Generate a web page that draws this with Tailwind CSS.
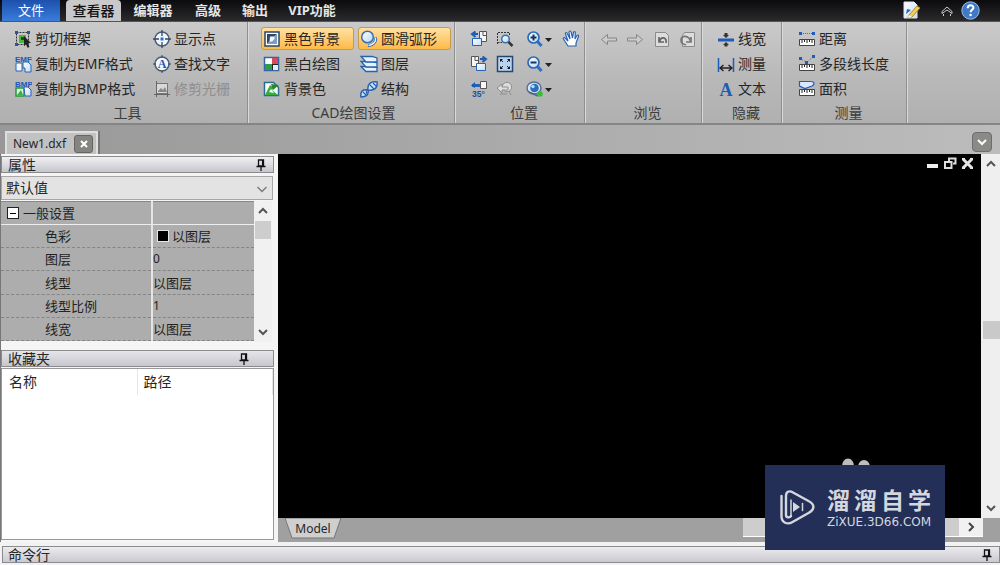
<!DOCTYPE html>
<html lang="zh-CN">
<head>
<meta charset="utf-8">
<meta name="viewport" content="width=device-width, initial-scale=1">
<title>CAD Viewer - New1.dxf</title>
<script src="https://cdn.jsdelivr.net/npm/@tailwindcss/browser@4"></script>
</head>
<body class="flex h-screen flex-col overflow-hidden bg-[#f2f2f3] font-['Noto_Sans','Noto_Sans_CJK_SC',sans-serif] text-sm text-[#262626]">

<svg class="absolute h-0 w-0" aria-hidden="true">
  <defs>
    <linearGradient id="lens" x1="0" y1="0" x2="1" y2="1"><stop offset="0" stop-color="#fff"/><stop offset="1" stop-color="#b9d8f7"/></linearGradient>
    <linearGradient id="sheet" x1="0" y1="0" x2="1" y2="1"><stop offset="0" stop-color="#fff"/><stop offset="1" stop-color="#c3dcf7"/></linearGradient>
    <symbol id="pin" viewBox="0 0 10 12"><path d="M2.5 1h5v6h-5zM0.5 7.5h9M5 8v4M6.6 1v6" fill="none" stroke="#111" stroke-width="1.3"/></symbol>
    <symbol id="chev" viewBox="0 0 12 12"><path d="M2 4l4 4 4-4" fill="none" stroke="currentColor" stroke-width="2"/></symbol>
    <symbol id="ruler" viewBox="0 0 18 18"><path d="M1.5 9.5h15v6h-15z" fill="#fff" stroke="#444"/><path d="M4 10v3M6.500 10v2M9 10v3M11.500 10v2M14 10v3" stroke="#222"/></symbol>
  </defs>
</svg>

<!-- Menu tabs -->
<header class="flex h-[22px] shrink-0 items-stretch border-b border-[#555] bg-linear-to-b from-[#0b0b0d] to-[#2b2b2d] text-[13px] font-bold text-[#e6e6e6]">
  <nav class="flex items-stretch pl-0.5">
    <button class="w-[58px] bg-linear-to-b from-[#1e50ad] to-[#3b7ddb] text-[13px] font-normal text-white">文件</button>
    <button class="ml-1.5 w-[55px] rounded-t-sm bg-[#c9c9c9] text-sm font-medium text-[#111]">查看器</button>
    <button class="w-[64px]">编辑器</button>
    <button class="w-[46px]">高级</button>
    <button class="w-12">输出</button>
    <button class="w-[66px]">VIP功能</button>
  </nav>
  <div class="ml-auto flex items-center pr-5">
    <button class="mr-5" aria-label="编辑文档"><svg class="h-[19px] w-[19px]" viewBox="0 0 19 19"><path d="M2 1h10l3 3v13H2z" fill="url(#sheet)" stroke="#d9e6f5"/><path d="M4 13l1-5 4 1z" fill="#2d66b5"/><path d="M7 14L15 5l3 2-8 9-4 1z" fill="#f1cf5a" stroke="#a98936"/><path d="M6 17l1-3 3 2z" fill="#fff"/></svg></button>
    <button class="mr-2" aria-label="收起功能区"><svg class="h-3 w-3" viewBox="0 0 12 12" fill="none" stroke="#ccc"><path d="M1 6.500L6 2l5 4.500v2L6 5 1 8.500zM2.500 9v2M9.500 9v2"/></svg></button>
    <button aria-label="帮助"><svg class="h-[19px] w-[19px]" viewBox="0 0 19 19"><circle cx="9.500" cy="9.500" r="8.700" fill="#4079c4" stroke="#9bbfe8"/><path d="M6.700 7.200c0-4 6-3.700 5.700-.3-.2 1.900-2.800 2-2.800 4.400" fill="none" stroke="#fff" stroke-width="2"/><circle cx="9.600" cy="14" r="1.300" fill="#fff"/></svg></button>
  </div>
</header>

<!-- Ribbon -->
<section class="flex h-[103px] shrink-0 items-stretch border-b-2 border-[#858585] bg-linear-to-b from-[#cacaca] via-[#bababa] to-[#b0b0b0] leading-5">

  <div class="flex w-[248px] shrink-0 flex-col border-r border-[#8f8f8f] pt-1">
    <div class="grid grid-cols-[139px_1fr] pl-3.5">
      <button class="flex h-[25px] items-center gap-[3px] whitespace-nowrap"><svg class="h-[18px] w-[18px] shrink-0" viewBox="0 0 18 18"><path d="M2.500 2.500h12v12h-12z" fill="none" stroke="#333" stroke-dasharray="2 1"/><path d="M5 5h7v8H5z" fill="#49b83c"/><path d="M7 7h3v3H7z" fill="#1d4f20"/><path d="M1 1h3v3H1zM13 1h3v3h-3zM1 13h3v3H1z" fill="#1d56b5"/><path d="M10 6l7 7-3 .3 1.500 3.700-2 .8-1.500-3.500-2 2z" fill="#222"/></svg>剪切框架</button>
      <button class="flex h-[25px] items-center gap-[3px] whitespace-nowrap"><svg class="h-[18px] w-[18px] shrink-0" viewBox="0 0 18 18"><circle cx="9" cy="9" r="7" fill="#f3f7fc" stroke="#4b5d78" stroke-width="1.500"/><path d="M9 0v6M9 12v6M0 9h6M12 9h6" stroke="#35475f" stroke-width="1.300"/><path d="M7.500 7.500h3v3h-3z" fill="#2a6fd0"/></svg>显示点</button>
      <button class="flex h-[25px] items-center gap-[3px] whitespace-nowrap"><svg class="h-[18px] w-[18px] shrink-0" viewBox="0 0 18 18"><text x="1" y="6.500" font-family="Liberation Sans" font-weight="bold" font-size="8" fill="#1d56b5">EMF</text><path d="M2 8h6v8H2z" fill="#f4f8ff" stroke="#2763ba"/><path d="M9 7h5l3 3v7h-6v-4H9z" fill="url(#sheet)" stroke="#2763ba"/></svg>复制为EMF格式</button>
      <button class="flex h-[25px] items-center gap-[3px] whitespace-nowrap"><svg class="h-[18px] w-[18px] shrink-0" viewBox="0 0 18 18"><circle cx="9" cy="9" r="7" fill="#f3f7fc" stroke="#4b5d78" stroke-width="1.500"/><path d="M9 0v3M9 15v3M0 9h3M15 9h3" stroke="#35475f"/><text x="9" y="13" text-anchor="middle" font-family="Liberation Serif" font-weight="bold" font-size="12" fill="#1d56b5">A</text></svg>查找文字</button>
      <button class="flex h-[25px] items-center gap-[3px] whitespace-nowrap"><svg class="h-[18px] w-[18px] shrink-0" viewBox="0 0 18 18"><text x="1" y="6.500" font-family="Liberation Sans" font-weight="bold" font-size="8" fill="#1d56b5">BMP</text><path d="M2 8h8v8H2z" fill="#dff5df" stroke="#27983a" stroke-width="1.500"/><path d="M3 15l4-5 2 5z" fill="#35b244"/><path d="M10 7h4l3 3v6h-6z" fill="url(#sheet)" stroke="#2763ba"/></svg>复制为BMP格式</button>
      <button disabled class="flex h-[25px] items-center gap-[3px] whitespace-nowrap text-[#8e8e8e]"><svg class="h-[18px] w-[18px] shrink-0" viewBox="0 0 18 18"><path d="M3.500 3.500h11v10h-11z" fill="#d8d8d8" stroke="#777"/><path d="M5 11l3-3 2 2 2-3 2 5H5z" fill="#888"/><path d="M1 14.500h16M3.500 1v16M14.500 12v5" stroke="#666"/></svg>修剪光栅</button>
    </div>
    <div class="pt-0.5 pl-2 text-center text-[#3c3c3c]">工具</div>
  </div>

  <div class="flex w-[207px] shrink-0 flex-col border-r border-l border-r-[#8f8f8f] border-l-[#dadada] pt-1">
    <div class="grid grid-cols-[93px_93px] gap-x-1 pl-3">
      <button aria-pressed="true" class="my-px flex h-[23px] items-center gap-[3px] rounded-[3px] border border-[#c59a4c] bg-linear-to-b from-[#ffe1a0] to-[#fdba45] pl-px whitespace-nowrap"><svg class="h-[18px] w-[18px] shrink-0" viewBox="0 0 18 18"><path d="M2 2h14v14H2z" fill="#fff" stroke="#27476f" stroke-width="1.500"/><path d="M4 4h10L4 14z" fill="#2f4667"/><path d="M14 4v10H4z" fill="#7d9cc5"/><path d="M7 6.500h4.500V9L9 11.500H6.500z" fill="#f2f7fd"/></svg>黑色背景</button>
      <button aria-pressed="true" class="my-px flex h-[23px] items-center gap-[3px] rounded-[3px] border border-[#c59a4c] bg-linear-to-b from-[#ffe1a0] to-[#fdba45] pl-px whitespace-nowrap"><svg class="h-[18px] w-[18px] shrink-0" viewBox="0 0 18 18"><circle cx="7.500" cy="7" r="5.800" fill="url(#lens)" stroke="#3d6fae" stroke-width="1.500"/><path d="M15.500 7.500c1 4-3 8.500-7.500 8" fill="none" stroke="#3d6fae" stroke-width="3"/><path d="M15.500 8c.8 3.500-2.700 7.500-7 7.300" fill="none" stroke="#fff" stroke-width="1.300"/></svg>圆滑弧形</button>
      <button class="flex h-[25px] items-center gap-[3px] pl-0.5 whitespace-nowrap"><svg class="h-[18px] w-[18px] shrink-0" viewBox="0 0 18 18"><path d="M1.500 2.500h14v13h-14z" fill="#fff" stroke="#34679f" stroke-width="1.500"/><path d="M9 3h6v6H9z" fill="#d34c5f"/><path d="M2 9h7v6H2z" fill="#2f9950"/><path d="M9 9h6v6H9z" fill="#222"/><path d="M10 10h5v5h-5z" fill="#e9eef5"/></svg>黑白绘图</button>
      <button class="flex h-[25px] items-center gap-[3px] pl-0.5 whitespace-nowrap"><svg class="h-[18px] w-[18px] shrink-0" viewBox="0 0 18 18" fill="#e8f2fd" stroke="#2862ae" stroke-width="1.300"><path d="M1 11.500h11l5 1v4H6z"/><path d="M1 6.500h11l5 1.500v4H6z"/><path d="M1 1.500h11l5 1.500v4H6z"/></svg>图层</button>
      <button class="flex h-[25px] items-center gap-[3px] pl-0.5 whitespace-nowrap"><svg class="h-[18px] w-[18px] shrink-0" viewBox="0 0 18 18"><path d="M1.500 2.500h9l5 5v8h-14z" fill="#fff" stroke="#2a6d93" stroke-width="1.500"/><path d="M2 15l5-10 4 3-2 2 6 5z" fill="#36ad3c"/><path d="M8 4l8 1-6 5z" fill="#27852e"/><path d="M6 12l2-3 3 4z" fill="#fff"/></svg>背景色</button>
      <button class="flex h-[25px] items-center gap-[3px] pl-0.5 whitespace-nowrap"><svg class="h-[18px] w-[18px] shrink-0" viewBox="0 0 18 18" fill="#cfe1f6" stroke="#2862ae" stroke-width="1.500"><path d="M1 17c-1-6 2-8 7-7 1 5-2 7-7 7zM8 10c-1-6 3-9 9-8 1 6-3 9-9 8z"/><path d="M3 12l3 3M6 10l1 4M10 5l4 4M13 3l3 3" stroke-width="1.200"/></svg>结构</button>
    </div>
    <div class="pt-0.5 pl-1 text-center text-[#3c3c3c]">CAD绘图设置</div>
  </div>

  <div class="flex w-[130px] shrink-0 flex-col border-r border-l border-r-[#8f8f8f] border-l-[#dadada] pt-1">
    <div class="grid grid-cols-[26px_30px_36px_24px] pl-3.5">
      <button class="flex h-[25px] items-center" aria-label="向左旋转"><svg class="h-[18px] w-[18px]" viewBox="0 0 18 18"><path d="M9.500 1.500h7v10h-7z" fill="#f7f7f7" stroke="#555"/><path d="M13 1.500v4h3.500" fill="none" stroke="#555"/><path d="M2.500 8.500h9v7h-9z" fill="url(#sheet)" stroke="#2563b8"/><path d="M8 4H4M5.500 1.500L2 4l3.500 3" fill="none" stroke="#1c5cb8" stroke-width="2"/></svg></button>
      <button class="flex h-[25px] items-center" aria-label="窗口缩放"><svg class="h-[18px] w-[18px]" viewBox="0 0 18 18"><path d="M1.500 14V2.500h12V5M1.500 12.500H6" fill="none" stroke="#333" stroke-dasharray="2 1"/><circle cx="9.500" cy="9" r="3.800" fill="url(#lens)" stroke="#3d6fae" stroke-width="1.500"/><path d="M12.500 12l4 4" stroke="#333" stroke-width="2.500"/></svg></button>
      <button class="flex h-[25px] items-center" aria-label="放大"><svg class="h-[18px] w-[27px]" viewBox="0 0 27 18"><circle cx="7.500" cy="7.500" r="5.500" fill="url(#lens)" stroke="#2b68b6" stroke-width="1.700"/><path d="M4.500 7.500h6M7.500 4.500v6" stroke="#17345e" stroke-width="2"/><path d="M11.500 11.500l4 4.500" stroke="#2d6ec2" stroke-width="3"/><path d="M19 8h7l-3.500 4z" fill="#222"/></svg></button>
      <button class="flex h-[25px] items-center" aria-label="平移"><svg class="h-[18px] w-[18px]" viewBox="0 0 18 18"><path d="M6 16L1.500 9c-.8-2 1.500-1.500 2.500 0L6 11 3.500 4c-.3-2 1.400-2 2 0L8 9 7 2.500c0-2 2-2 2.200 0L10.500 8l1-5.500c.5-1.700 2-1 1.800.5L13 9l2-3.500c1-1 2-.3 1.500 1L14 13v3z" fill="#fff" stroke="#2763ba" stroke-width="1.200"/></svg></button>
      <button class="flex h-[25px] items-center" aria-label="向右旋转"><svg class="h-[18px] w-[18px]" viewBox="0 0 18 18"><path d="M1.500 1.500h7v10h-7z" fill="#f7f7f7" stroke="#555"/><path d="M5 1.500v4h3.500" fill="none" stroke="#555"/><path d="M6.500 8.500h9v7h-9z" fill="url(#sheet)" stroke="#2563b8"/><path d="M10 4h4M12.500 1.500L16 4l-3.500 3" fill="none" stroke="#1c5cb8" stroke-width="2"/></svg></button>
      <button class="flex h-[25px] items-center" aria-label="适合窗口"><svg class="h-[18px] w-[18px]" viewBox="0 0 18 18"><path d="M1.500 1.500h15v15h-15z" fill="#b9d4f0" stroke="#25476f" stroke-width="1.500"/><path d="M4 4h3L4 7zM14 4v3l-3-3zM4 14v-3l3 3zM14 14h-3l3-3z" fill="#111"/><path d="M4 4l3 3M14 4l-3 3M4 14l3-3M14 14l-3-3" stroke="#222"/></svg></button>
      <button class="flex h-[25px] items-center" aria-label="缩小"><svg class="h-[18px] w-[27px]" viewBox="0 0 27 18"><circle cx="7.500" cy="7.500" r="5.500" fill="url(#lens)" stroke="#2b68b6" stroke-width="1.700"/><path d="M4.500 7.500h6" stroke="#17345e" stroke-width="2"/><path d="M11.500 11.500l4 4.500" stroke="#2d6ec2" stroke-width="3"/><path d="M19 8h7l-3.500 4z" fill="#222"/></svg></button>
      <span></span>
      <button class="flex h-[25px] items-center" aria-label="旋转35°"><svg class="h-[18px] w-[18px]" viewBox="0 0 18 18"><path d="M10.500 1.500h6v7h-6z" fill="#f7f7f7" stroke="#555"/><path d="M2 5.500h8" stroke="#2563b8" stroke-width="3"/><path d="M5 2L1 5.500 5 8z" fill="#1c5cb8"/><text x="2" y="16.500" font-family="Liberation Sans" font-size="8.500" font-weight="bold" fill="#1c4f9f">35°</text></svg></button>
      <button disabled class="flex h-[25px] items-center" aria-label="上一视图"><svg class="h-[18px] w-[18px]" viewBox="0 0 18 18" fill="#ddd" stroke="#8d8d8d"><circle cx="11" cy="7" r="4.700"/><path d="M1 8l5-4v3h6v3H6v3zM13 11l2 4M4 14h7"/></svg></button>
      <button class="flex h-[25px] items-center" aria-label="三维视图"><svg class="h-[18px] w-[27px]" viewBox="0 0 27 18"><ellipse cx="8" cy="8" rx="7" ry="6" fill="#d8e6f5" stroke="#57708e" stroke-width="1.500"/><circle cx="8.500" cy="8" r="4.300" fill="#296fbe"/><circle cx="7" cy="6.500" r="1.700" fill="#b7dcff"/><path d="M3 12l9 4" stroke="#4c6685" stroke-width="1.500"/><circle cx="14" cy="14" r="2.800" fill="#34bf35"/><path d="M19 8h7l-3.500 4z" fill="#222"/></svg></button>
    </div>
    <div class="pt-0.5 pl-2 text-center text-[#3c3c3c]">位置</div>
  </div>

  <div class="flex w-[117px] shrink-0 flex-col border-r border-l border-r-[#8f8f8f] border-l-[#dadada] pt-1">
    <div class="flex h-[75px] items-start justify-between pr-1 pl-3.5">
      <button disabled class="flex h-[25px] items-center" aria-label="后退"><svg class="h-[18px] w-[18px]" viewBox="0 0 18 18"><path d="M1.500 9.500l6-5v3.500h9v3h-9v3.500z" fill="#ccc" stroke="#858585"/></svg></button>
      <button disabled class="flex h-[25px] items-center" aria-label="前进"><svg class="h-[18px] w-[18px]" viewBox="0 0 18 18"><path d="M16.500 9.500l-6-5v3.500h-9v3h9v3.500z" fill="#ccc" stroke="#858585"/></svg></button>
      <button disabled class="flex h-[25px] items-center" aria-label="撤消"><svg class="h-[18px] w-[18px]" viewBox="0 0 18 18"><path d="M2.500 2.500h10l3 3v11h-13z" fill="#ddd" stroke="#8b8b8b"/><path d="M6 7v5h5M6.500 11.500C8 6 14 7 13 13" fill="none" stroke="#666" stroke-width="1.700"/></svg></button>
      <button disabled class="flex h-[25px] items-center" aria-label="重做"><svg class="h-[18px] w-[18px]" viewBox="0 0 18 18"><path d="M15.500 2.500h-10l-2 3v11h12z" fill="#ddd" stroke="#8b8b8b"/><path d="M12 7v5H7M11.500 11.500C10 5 2 5 2 10s4 4 5 5" fill="none" stroke="#777" stroke-width="1.700"/></svg></button>
    </div>
    <div class="pt-0.5 pl-2 text-center text-[#3c3c3c]">浏览</div>
  </div>

  <div class="flex w-[80px] shrink-0 flex-col border-r border-l border-r-[#8f8f8f] border-l-[#dadada] pt-1">
    <div class="flex flex-col pl-3.5">
      <button class="flex h-[25px] items-center gap-[3px]"><svg class="h-[18px] w-[18px]" viewBox="0 0 18 18"><path d="M1 10h16" stroke="#1d5cb9" stroke-width="3"/><path d="M7.500 3h3v2.500h-3zM7.500 14h3v2.500h-3z" fill="#333"/><path d="M6 5h6l-3 3zM6 15h6l-3-3z" fill="#333"/></svg>线宽</button>
      <button class="flex h-[25px] items-center gap-[3px]"><svg class="h-[18px] w-[18px]" viewBox="0 0 18 18"><path d="M1.500 3v14M16.500 3v14" stroke="#1d5cb9" stroke-width="1.500"/><path d="M3 13h12M6.500 10L3 13l3.500 3M11.500 10l3.500 3-3.500 3" fill="none" stroke="#222" stroke-width="1.400"/></svg>测量</button>
      <button class="flex h-[25px] items-center gap-[3px]"><svg class="h-[18px] w-[18px]" viewBox="0 0 18 18"><text x="9" y="15.500" text-anchor="middle" font-family="Liberation Serif" font-weight="bold" font-size="18" fill="#1d5cb9">A</text></svg>文本</button>
    </div>
    <div class="pt-0.5 pl-2 text-center text-[#3c3c3c]">隐藏</div>
  </div>

  <div class="flex w-[125px] shrink-0 flex-col border-r border-l border-r-[#8f8f8f] border-l-[#dadada] pt-1">
    <div class="flex flex-col pl-[15px]">
      <button class="flex h-[25px] items-center gap-[3px] whitespace-nowrap"><svg class="h-[18px] w-[18px]" viewBox="0 0 18 18"><use href="#ruler"/><path d="M3 3.500h12" stroke="#666" stroke-dasharray="1 1"/><path d="M1 2h3v3H1zM14 2h3v3h-3z" fill="#1d5cb9"/></svg>距离</button>
      <button class="flex h-[25px] items-center gap-[3px] whitespace-nowrap"><svg class="h-[18px] w-[18px]" viewBox="0 0 18 18"><use href="#ruler"/><path d="M2.500 3.500l6 4 7-6" fill="none" stroke="#777" stroke-dasharray="1 1"/><path d="M1 2h3v3H1zM14 0h3v3h-3zM7 6h3v3H7z" fill="#1d5cb9"/></svg>多段线长度</button>
      <button class="flex h-[25px] items-center gap-[3px] whitespace-nowrap"><svg class="h-[18px] w-[18px]" viewBox="0 0 18 18"><use href="#ruler"/><path d="M1.500 1.500H12c5 0 5 3 2 4.500L7 8.500 1.500 6z" fill="#dbeafb" stroke="#1d5cb9" stroke-width="1.200"/></svg>面积</button>
    </div>
    <div class="pt-0.5 pl-2 text-center text-[#3c3c3c]">测量</div>
  </div>
  <div class="flex-1 border-l border-[#dadada]"></div>
</section>

<!-- Document tabs -->
<div class="flex h-[29px] shrink-0 items-end bg-linear-to-r from-[#989898] to-[#bcbcbc] pl-[5px]">
  <div class="flex h-[23px] items-center gap-2 border-t-2 border-r-2 border-l-2 border-[#dedede] bg-[#c2c2c2] pr-[3px] pl-1.5 text-xs shadow-[2px_0_0_#777]">
    <button class="leading-4">New1.dxf</button>
    <button class="grid h-[18px] w-[19px] place-items-center rounded-[3px] border border-[#666] bg-[#858580]" aria-label="关闭标签"><svg class="h-2 w-2" viewBox="0 0 8 8"><path d="M1 1l6 6M7 1L1 7" stroke="#fff" stroke-width="2"/></svg></button>
  </div>
  <button class="mr-2 mb-0.5 ml-auto grid h-5 w-5 place-items-center rounded-[4px] border border-[#6d6d6d] bg-[#8a8a86] text-white" aria-label="标签列表"><svg class="h-3 w-3"><use href="#chev"/></svg></button>
</div>

<!-- Workspace -->
<main class="flex min-h-0 flex-1">
  <aside class="flex w-[278px] shrink-0 flex-col border-l border-[#777] bg-[#f5f5f6] pt-0.5 pr-1">
    <h2 class="flex h-[17px] shrink-0 items-center justify-between border border-[#8b8b8d] bg-linear-to-b from-[#f0f0f3] to-[#c6c6ce] pr-[7px] pl-1.5 leading-4">属性<button aria-label="固定属性"><svg class="h-3 w-2.5"><use href="#pin"/></svg></button></h2>
    <div class="relative mt-[3px] mr-px flex h-6 shrink-0 border border-[#a7a7a7] bg-[#e3e3e3]">
      <select aria-label="选择对象" class="h-full w-full appearance-none bg-transparent pl-1 leading-5 outline-none"><option>默认值</option></select>
      <svg class="pointer-events-none absolute top-1.5 right-1 h-3 w-3 text-[#777]" viewBox="0 0 12 12"><path d="M1.500 4L6 8.500 10.500 4" fill="none" stroke="currentColor" stroke-width="1.300"/></svg>
    </div>
    <div class="mt-px mr-0.5 flex h-[141px] shrink-0">
      <table class="h-[140px] flex-1 table-fixed border-collapse bg-[#adadad] text-[13px] leading-5 text-[#222]">
        <colgroup><col class="w-[151px]"><col></colgroup>
        <tbody>
          <tr class="h-[23px] border-t border-b border-t-[#888] border-b-[#eee]"><th class="border-r-2 border-[#e5e5e5] p-0 text-left font-normal"><span class="flex items-center gap-1 pl-1.5"><button class="grid h-3 w-3 place-items-center border border-[#222] bg-white" aria-label="折叠一般设置"><span class="block h-px w-1.5 bg-black"></span></button>一般设置</span></th><td></td></tr>
          <tr class="h-[23px] border-b border-dashed border-[#858585]"><th class="border-r-2 border-solid border-r-[#e5e5e5] p-0 pl-11 text-left font-normal">色彩</th><td class="p-0"><span class="flex items-center gap-[3px] pl-1"><span class="h-3 w-3 border border-[#e5e5e5] bg-black"></span>以图层</span></td></tr>
          <tr class="h-[23px] border-b border-dashed border-[#858585]"><th class="border-r-2 border-solid border-r-[#e5e5e5] p-0 pl-11 text-left font-normal">图层</th><td class="p-0 text-xs">0</td></tr>
          <tr class="h-[23px] border-b border-dashed border-[#858585]"><th class="border-r-2 border-solid border-r-[#e5e5e5] p-0 pl-11 text-left font-normal">线型</th><td class="p-0">以图层</td></tr>
          <tr class="h-[23px] border-b border-dashed border-[#858585]"><th class="border-r-2 border-solid border-r-[#e5e5e5] p-0 pl-11 text-left font-normal">线型比例</th><td class="p-0 text-xs">1</td></tr>
          <tr class="h-[23px] border-b border-dashed border-[#858585]"><th class="border-r-2 border-solid border-r-[#e5e5e5] p-0 pl-11 text-left font-normal">线宽</th><td class="p-0">以图层</td></tr>
        </tbody>
      </table>
      <div class="flex w-[18px] shrink-0 flex-col items-center bg-[#f1f1f1] text-[#555]">
        <button class="grid h-5 w-full place-items-center" aria-label="向上滚动"><svg class="h-3 w-3 rotate-180"><use href="#chev"/></svg></button>
        <div class="h-[18px] w-4 bg-[#cdcdcd]"></div>
        <button class="mt-auto grid h-5 w-full place-items-center" aria-label="向下滚动"><svg class="h-3 w-3"><use href="#chev"/></svg></button>
      </div>
    </div>
    <h2 class="mt-2 flex h-[17px] shrink-0 items-center justify-between border border-[#8b8b8d] bg-linear-to-b from-[#e6e6e9] to-[#c6c6ce] pr-6 pl-1.5 leading-4">收藏夹<button aria-label="固定收藏夹"><svg class="h-3 w-2.5"><use href="#pin"/></svg></button></h2>
    <div class="mt-px mb-0.5 flex-1 border border-[#999] bg-white">
      <table class="w-full table-fixed border-collapse leading-[26px]">
        <colgroup><col class="w-[135px]"><col></colgroup>
        <thead><tr><th class="border-r border-[#e5e5e5] p-0 pl-[7px] text-left font-normal">名称</th><th class="border-r border-[#e5e5e5] p-0 pl-1.5 text-left font-normal">路径</th></tr></thead>
      </table>
    </div>
  </aside>

  <section class="flex min-w-0 flex-1 flex-col">
    <div class="flex min-h-0 flex-1">
      <div class="relative flex-1 bg-black">
        <div class="flex justify-end gap-1 pt-[3px] pr-[7px]">
          <button aria-label="最小化"><svg class="h-[13px] w-[13px]" viewBox="0 0 13 13"><path d="M1 7h11v4H1z" fill="#eee"/></svg></button>
          <button aria-label="还原"><svg class="h-[13px] w-[14px]" viewBox="0 0 14 13" fill="none" stroke="#ddd" stroke-width="2"><path d="M6 4V1.500h6.500v5H10"/><path d="M2 5h6.500v6H2z"/></svg></button>
          <button aria-label="关闭"><svg class="h-[13px] w-[13px]" viewBox="0 0 13 13"><path d="M2 2l9 9M11 2l-9 9" stroke="#e5e5e5" stroke-width="3"/><path d="M1 2h3M9 2h3M1 11h3M9 11h3" stroke="#e5e5e5" stroke-width="2"/></svg></button>
        </div>
        <svg class="absolute right-[110px] bottom-[48px] h-3 w-[30px]" viewBox="0 0 30 12" fill="#bdbdbd"><ellipse cx="7" cy="8" rx="6" ry="7.500"/><ellipse cx="23" cy="9" rx="6" ry="7"/></svg>
      </div>
      <div class="flex w-[19px] shrink-0 flex-col bg-[#efefef] text-[#555]">
        <button class="grid h-5 place-items-center" aria-label="向上滚动"><svg class="h-3 w-3 rotate-180"><use href="#chev"/></svg></button>
        <div class="grow-[12]"></div>
        <div class="ml-0.5 h-[18px] bg-[#c9c9c9]"></div>
        <div class="grow-[13]"></div>
        <button class="grid h-5 place-items-center" aria-label="向下滚动"><svg class="h-3 w-3"><use href="#chev"/></svg></button>
      </div>
    </div>
    <div class="flex h-6 shrink-0 items-start bg-[#a0a0a0]">
      <button class="relative ml-[5px] h-[21px] w-[60px] text-xs leading-4"><svg class="absolute inset-0 h-full w-full" viewBox="0 0 60 21" preserveAspectRatio="none"><path d="M2 0h56l-7 20H9z" fill="#cfcfcf" stroke="#777"/></svg><span class="relative">Model</span></button>
      <div class="ml-auto flex h-[19px] w-[240px] items-center justify-end border-b border-white bg-[#cdcdcd] text-[#444]"><button class="grid h-[18px] w-6 place-items-center bg-[#f1f1f1]" aria-label="向右滚动"><svg class="h-3 w-3 -rotate-90"><use href="#chev"/></svg></button></div>
      <div class="w-[17px]"></div>
    </div>
  </section>
</main>

<!-- Command line -->
<footer class="mt-1 mb-0.5 ml-0.5 flex h-[17px] shrink-0 items-center justify-between border border-[#8b8b8d] bg-linear-to-b from-[#ececef] to-[#c9c9d0] pr-[7px] pl-[5px] leading-4">命令行<button aria-label="固定命令行"><svg class="h-3 w-2.5"><use href="#pin"/></svg></button></footer>

<!-- Site badge over the workspace -->
<div class="absolute right-[55px] bottom-[15px] flex h-[85px] w-[180px] items-center gap-3 bg-[#232f57] pl-[15px] text-[#d5d7df]">
  <svg class="h-[35px] w-[35px] shrink-0" viewBox="0 0 35 35" fill="none" stroke="currentColor" stroke-width="2.400" stroke-linecap="round"><path d="M1.500 6v20c0 7 6 9 11 6l16-9c7-4 6-9 0-12L13 2.500C9 0 6 2 6 6v19c0 3 4 3 5 1"/><path d="M11 26V10" stroke-width="1.500"/><path d="M13 12l7 5-7 5z" fill="currentColor" stroke="none"/><path d="M22.500 13.500v7" stroke-width="1.500"/></svg>
  <div class="whitespace-nowrap">
    <div class="flex justify-between text-[23px] leading-6 font-bold"><span>溜</span><span>溜</span><span>自</span><span>学</span></div>
    <div class="mt-1 font-['DejaVu_Sans'] text-xs leading-3">ZiXUE.3D66.COM</div>
  </div>
</div>
</body>
</html>
